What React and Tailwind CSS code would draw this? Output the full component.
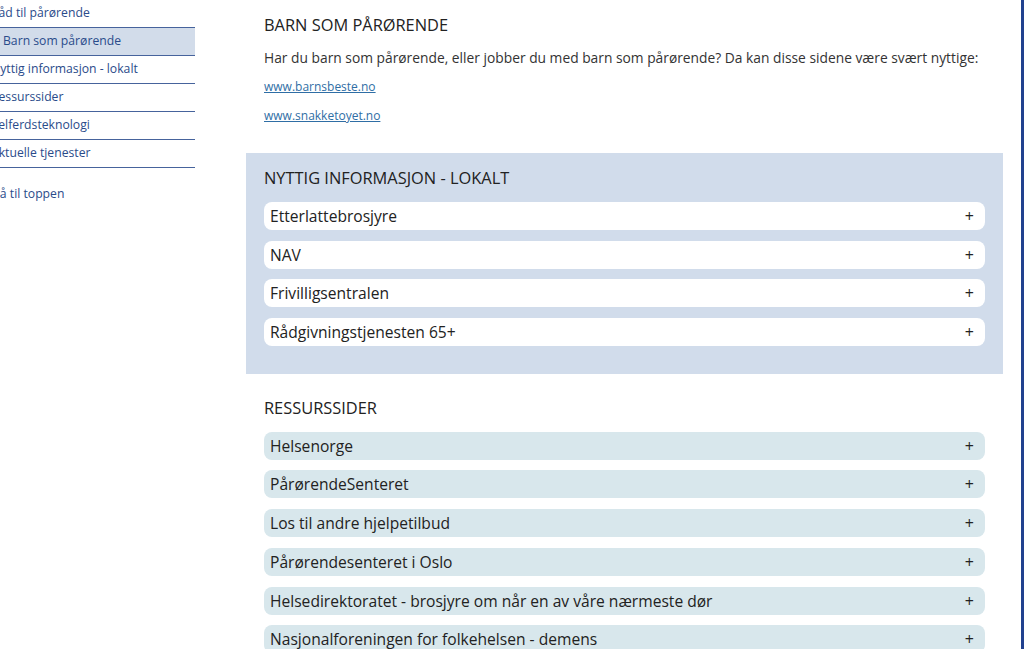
const sideItems = [
  { label: 'Råd til pårørende', child: false },
  { label: 'Barn som pårørende', child: true, active: true },
  { label: 'Nyttig informasjon - lokalt', child: false },
  { label: 'Ressurssider', child: false },
  { label: 'Velferdsteknologi', child: false },
  { label: 'Aktuelle tjenester', child: false },
];

const lokalt = ['Etterlattebrosjyre', 'NAV', 'Frivilligsentralen', 'Rådgivningstjenesten 65+'];

const ressurser = [
  'Helsenorge',
  'PårørendeSenteret',
  'Los til andre hjelpetilbud',
  'Pårørendesenteret i Oslo',
  'Helsedirektoratet - brosjyre om når en av våre nærmeste dør',
  'Nasjonalforeningen for folkehelsen - demens',
];

function AccordionRow({ title, tone }) {
  return (
    <div
      className={`flex h-[28px] items-center justify-between rounded-[8px] pl-[6px] pr-[11px] ${
        tone === 'white' ? 'bg-white' : 'bg-[#d8e7ec]'
      }`}
    >
      <span className="text-[15.6px] leading-[20px] text-[#222]">{title}</span>
      <span className="text-[16px] font-medium leading-none text-[#222]">+</span>
    </div>
  );
}

export default function App() {
  return (
    <div
      className="flex h-[649px] w-[1024px] overflow-hidden border-r-[3px] border-[#21418f] bg-white"
      style={{ fontFamily: '"Open Sans", "DejaVu Sans", sans-serif' }}
    >
      {/* venstremeny, skåret av i venstre kant */}
      <aside className="w-[195px] shrink-0 overflow-hidden">
        <ul className="-ml-[9px]">
          {sideItems.map((item) => (
            <li
              key={item.label}
              className={`flex h-[28px] items-center border-b border-[#46639c] text-[12.2px] text-[#2a4b8a] ${
                item.child ? 'pl-[12px]' : 'pl-0'
              } ${item.active ? 'bg-[#d2dcea]' : ''}`}
            >
              {item.label}
            </li>
          ))}
        </ul>
        <p className="-ml-[9px] mt-[17px] text-[12.2px] text-[#2a4b8a]">Gå til toppen</p>
      </aside>

      <main className="ml-[51px] w-[757px] shrink-0">
        {/* Barn som pårørende */}
        <section className="px-[18px] pb-[27px] pt-[13px]">
          <h2 className="text-[16.4px] leading-[24px] text-[#222]">BARN SOM PÅRØRENDE</h2>
          <p className="mt-[11px] whitespace-nowrap text-[13.8px] leading-[20px] text-[#333]">
            Har du barn som pårørende, eller jobber du med barn som pårørende? Da kan disse sidene være svært nyttige:
          </p>
          <div className="mt-[9px] flex flex-col gap-[9px] text-[12px] leading-[20px]">
            <a href="#" className="w-fit text-[#2f6ea5] underline">www.barnsbeste.no</a>
            <a href="#" className="w-fit text-[#2f6ea5] underline">www.snakketoyet.no</a>
          </div>
        </section>

        {/* Nyttig informasjon - lokalt */}
        <section className="bg-[#d1dceb] px-[18px] pb-[28px] pt-[13px]">
          <h2 className="text-[16.4px] leading-[24px] text-[#222]">NYTTIG INFORMASJON - LOKALT</h2>
          <div className="mt-[12px] flex flex-col gap-[10.5px]">
            {lokalt.map((t) => (
              <AccordionRow key={t} title={t} tone="white" />
            ))}
          </div>
        </section>

        {/* Ressurssider */}
        <section className="px-[18px] pt-[22px]">
          <h2 className="text-[16.4px] leading-[24px] text-[#222]">RESSURSSIDER</h2>
          <div className="mt-[12px] flex flex-col gap-[10.8px]">
            {ressurser.map((t) => (
              <AccordionRow key={t} title={t} tone="blue" />
            ))}
          </div>
        </section>
      </main>
    </div>
  );
}
